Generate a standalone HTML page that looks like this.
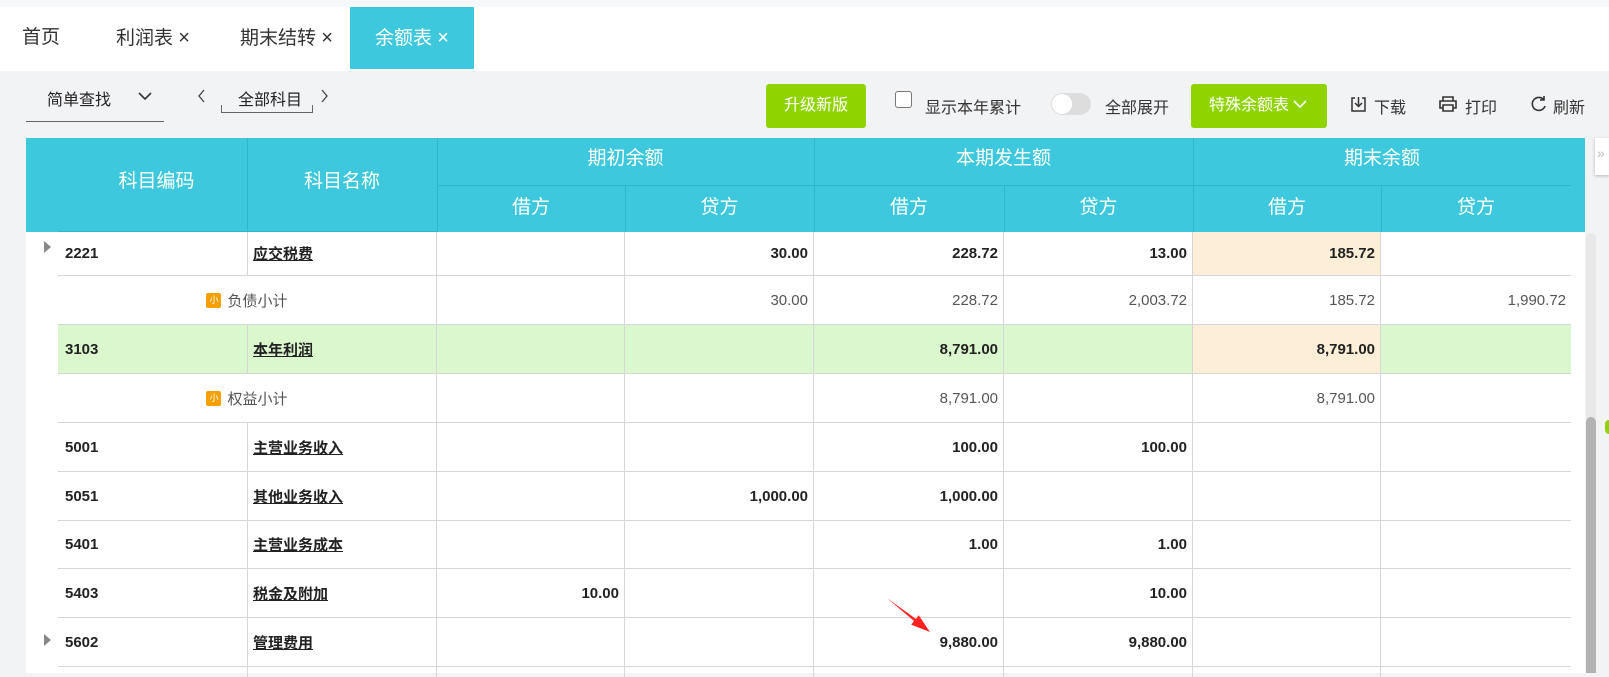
<!DOCTYPE html>
<html><head><meta charset="utf-8"><style>
*{margin:0;padding:0;box-sizing:border-box}
body{width:1609px;height:673px;overflow:hidden;background:#f2f3f5;font-family:"Liberation Sans","Noto Sans CJK SC",sans-serif;position:relative;color:#222}
.a{position:absolute}
.tab{position:absolute;top:7px;height:62px;line-height:62px;font-size:19px;color:#333}
.x{font-size:20px;font-weight:300}
.hd{position:absolute;background:#3ec8dd;color:#fff;font-size:19px;text-align:center}
.vl{position:absolute;width:1px;background:#2fb6cb}
.row{position:absolute;left:58px;width:1513px;border-bottom:1px solid #d6d6d6}
.c{position:absolute;top:0;height:100%;border-right:1px solid #d6d6d6;font-size:15px;display:flex;align-items:center}
.b{font-weight:bold}
.r{justify-content:flex-end;padding-right:5px}
.u{text-decoration:underline;padding-left:5px}
.sub{color:#555;font-weight:normal}
.ic{display:inline-block;width:15px;height:15px;background:#f5a000;border-radius:2px;color:#fff;font-size:9px;text-align:center;line-height:15px;margin-right:6px}
</style></head><body>
<div class="a" style="left:0;top:0;width:1609px;height:7px;background:#f7f8fa"></div>
<div class="a" style="left:0;top:7px;width:1609px;height:64px;background:#fff"></div>
<div class="tab" style="left:22px">首页</div>
<div class="tab" style="left:116px">利润表 <span class="x">×</span></div>
<div class="tab" style="left:240px">期末结转 <span class="x">×</span></div>
<div class="tab" style="left:350px;width:124px;background:#3ec8dd;color:#fff;text-align:center">余额表 <span class="x">×</span></div>

<div class="a" style="left:47px;top:86px;font-size:16px">简单查找</div>
<svg class="a" style="left:137px;top:91px" width="16" height="10"><path d="M2 2l6 6 6-6" fill="none" stroke="#333" stroke-width="1.6"/></svg>
<div class="a" style="left:26px;top:121px;width:138px;height:1px;background:#666"></div>
<svg class="a" style="left:196px;top:88px" width="10" height="16"><path d="M8 2L3 8l5 6" fill="none" stroke="#444" stroke-width="1.3"/></svg>
<div class="a" style="left:238px;top:86px;font-size:16px">全部科目</div>
<div class="a" style="left:221px;top:105px;width:92px;height:8px;border:1px solid #666;border-top:none"></div>
<svg class="a" style="left:320px;top:88px" width="10" height="16"><path d="M2 2l5 6-5 6" fill="none" stroke="#444" stroke-width="1.3"/></svg>

<div class="a" style="left:766px;top:84px;width:100px;height:44px;background:#8fd400;border-radius:3px;color:#fff;font-size:16px;line-height:44px;text-align:center">升级新版</div>
<div class="a" style="left:895px;top:91px;width:17px;height:17px;border:1.5px solid #777;border-radius:3px;background:#fff"></div>
<div class="a" style="left:925px;top:94px;font-size:16px;color:#333">显示本年累计</div>
<div class="a" style="left:1051px;top:93px;width:40px;height:22px;border-radius:11px;background:#ddd"></div>
<div class="a" style="left:1052px;top:94px;width:20px;height:20px;border-radius:10px;background:#fff"></div>
<div class="a" style="left:1105px;top:94px;font-size:16px;color:#333">全部展开</div>
<div class="a" style="left:1191px;top:84px;width:136px;height:44px;background:#8fd400;border-radius:3px;color:#fff;font-size:16px;line-height:44px;padding-left:18px">特殊余额表 <svg width="14" height="10" style="vertical-align:1px"><path d="M1 2l6 6 6-6" fill="none" stroke="#fff" stroke-width="1.6"/></svg></div>
<svg class="a" style="left:1350px;top:95px" width="18" height="18"><path d="M5 3H2v13h13V3h-3M8.5 2v9M5 8l3.5 3.5L12 8" fill="none" stroke="#333" stroke-width="1.5"/></svg>
<div class="a" style="left:1374px;top:94px;font-size:16px;color:#333">下载</div>
<svg class="a" style="left:1438px;top:95px" width="20" height="18"><path d="M5 6V2h10v4M5 13H2V6h16v7h-3M5 10h10v6H5z" fill="none" stroke="#333" stroke-width="1.6"/></svg>
<div class="a" style="left:1465px;top:94px;font-size:16px;color:#333">打印</div>
<svg class="a" style="left:1530px;top:95px" width="18" height="18"><path d="M14 5A6.5 6.5 0 1 0 15 11M14 1v4h-4" fill="none" stroke="#333" stroke-width="1.6"/></svg>
<div class="a" style="left:1553px;top:94px;font-size:16px;color:#333">刷新</div>

<div class="a" style="left:26px;top:232px;width:1559px;height:441px;background:#fff"></div>
<div class="hd" style="left:26px;top:138px;width:1559px;height:94px"></div>
<div class="hd" style="left:26px;top:138px;width:221px;height:94px;line-height:88px;padding-left:40px">科目编码</div>
<div class="hd" style="left:247px;top:138px;width:190px;height:94px;line-height:88px">科目名称</div>
<div class="hd" style="left:437px;top:138px;width:377px;height:47px;line-height:42px">期初余额</div>
<div class="hd" style="left:814px;top:138px;width:379px;height:47px;line-height:42px">本期发生额</div>
<div class="hd" style="left:1193px;top:138px;width:378px;height:47px;line-height:42px">期末余额</div>
<div class="a" style="left:437px;top:185px;width:1134px;height:1px;background:#2fb6cb"></div>
<div class="a" style="left:58px;top:231px;width:1513px;height:1px;background:#2fb6cb"></div>
<div class="hd" style="left:437px;top:186px;width:188px;height:46px;line-height:44px">借方</div>
<div class="hd" style="left:625px;top:186px;width:189px;height:46px;line-height:44px">贷方</div>
<div class="hd" style="left:814px;top:186px;width:190px;height:46px;line-height:44px">借方</div>
<div class="hd" style="left:1004px;top:186px;width:189px;height:46px;line-height:44px">贷方</div>
<div class="hd" style="left:1193px;top:186px;width:188px;height:46px;line-height:44px">借方</div>
<div class="hd" style="left:1381px;top:186px;width:190px;height:46px;line-height:44px">贷方</div>
<div class="vl" style="left:247px;top:138px;height:94px"></div>
<div class="vl" style="left:437px;top:138px;height:94px"></div>
<div class="vl" style="left:814px;top:138px;height:94px"></div>
<div class="vl" style="left:1193px;top:138px;height:94px"></div>
<div class="vl" style="left:625px;top:185px;height:47px"></div>
<div class="vl" style="left:1004px;top:185px;height:47px"></div>
<div class="vl" style="left:1381px;top:185px;height:47px"></div>

<div class="row" style="top:232px;height:44px">
<div class="c b" style="left:0;width:189px;padding-left:7px;border:none">2221</div>
<div class="c b" style="left:189px;width:190px;border-left:1px solid #d6d6d6"><span class="u">应交税费</span></div>
<div class="c b r" style="left:379px;width:188px"></div>
<div class="c b r" style="left:567px;width:189px">30.00</div>
<div class="c b r" style="left:756px;width:190px">228.72</div>
<div class="c b r" style="left:946px;width:189px">13.00</div>
<div class="c b r" style="left:1135px;width:188px;background:#fdeed8">185.72</div>
</div>
<div class="row" style="top:276px;height:49px">
<div class="c sub" style="left:0;width:379px;justify-content:center"><span class="ic">小</span>负债小计</div>
<div class="c sub" style="left:379px;width:188px"></div>
<div class="c sub r" style="left:567px;width:189px">30.00</div>
<div class="c sub r" style="left:756px;width:190px">228.72</div>
<div class="c sub r" style="left:946px;width:189px">2,003.72</div>
<div class="c sub r" style="left:1135px;width:188px">185.72</div>
<div class="c sub r" style="left:1323px;width:190px;border:none">1,990.72</div>
</div>
<div class="row" style="top:325px;height:49px;background:#dbf7cd">
<div class="c b" style="left:0;width:189px;padding-left:7px;border:none">3103</div>
<div class="c b" style="left:189px;width:190px;border-left:1px solid #d6d6d6"><span class="u">本年利润</span></div>
<div class="c b r" style="left:379px;width:188px"></div>
<div class="c b r" style="left:567px;width:189px"></div>
<div class="c b r" style="left:756px;width:190px">8,791.00</div>
<div class="c b r" style="left:946px;width:189px"></div>
<div class="c b r" style="left:1135px;width:188px;background:#fdeed8">8,791.00</div>
</div>
<div class="row" style="top:374px;height:49px">
<div class="c sub" style="left:0;width:379px;justify-content:center"><span class="ic">小</span>权益小计</div>
<div class="c sub" style="left:379px;width:188px"></div>
<div class="c sub" style="left:567px;width:189px"></div>
<div class="c sub r" style="left:756px;width:190px">8,791.00</div>
<div class="c sub" style="left:946px;width:189px"></div>
<div class="c sub r" style="left:1135px;width:188px">8,791.00</div>
</div>
<div class="row" style="top:423px;height:49px">
<div class="c b" style="left:0;width:189px;padding-left:7px;border:none">5001</div>
<div class="c b" style="left:189px;width:190px;border-left:1px solid #d6d6d6"><span class="u">主营业务收入</span></div>
<div class="c" style="left:379px;width:188px"></div><div class="c" style="left:567px;width:189px"></div>
<div class="c b r" style="left:756px;width:190px">100.00</div>
<div class="c b r" style="left:946px;width:189px">100.00</div>
<div class="c" style="left:1135px;width:188px"></div>
</div>
<div class="row" style="top:472px;height:49px">
<div class="c b" style="left:0;width:189px;padding-left:7px;border:none">5051</div>
<div class="c b" style="left:189px;width:190px;border-left:1px solid #d6d6d6"><span class="u">其他业务收入</span></div>
<div class="c" style="left:379px;width:188px"></div>
<div class="c b r" style="left:567px;width:189px">1,000.00</div>
<div class="c b r" style="left:756px;width:190px">1,000.00</div>
<div class="c" style="left:946px;width:189px"></div>
<div class="c" style="left:1135px;width:188px"></div>
</div>
<div class="row" style="top:521px;height:48px">
<div class="c b" style="left:0;width:189px;padding-left:7px;border:none">5401</div>
<div class="c b" style="left:189px;width:190px;border-left:1px solid #d6d6d6"><span class="u">主营业务成本</span></div>
<div class="c" style="left:379px;width:188px"></div><div class="c" style="left:567px;width:189px"></div>
<div class="c b r" style="left:756px;width:190px">1.00</div>
<div class="c b r" style="left:946px;width:189px">1.00</div>
<div class="c" style="left:1135px;width:188px"></div>
</div>
<div class="row" style="top:569px;height:49px">
<div class="c b" style="left:0;width:189px;padding-left:7px;border:none">5403</div>
<div class="c b" style="left:189px;width:190px;border-left:1px solid #d6d6d6"><span class="u">税金及附加</span></div>
<div class="c b r" style="left:379px;width:188px">10.00</div>
<div class="c" style="left:567px;width:189px"></div>
<div class="c" style="left:756px;width:190px"></div>
<div class="c b r" style="left:946px;width:189px">10.00</div>
<div class="c" style="left:1135px;width:188px"></div>
</div>
<div class="row" style="top:618px;height:49px">
<div class="c b" style="left:0;width:189px;padding-left:7px;border:none">5602</div>
<div class="c b" style="left:189px;width:190px;border-left:1px solid #d6d6d6"><span class="u">管理费用</span></div>
<div class="c" style="left:379px;width:188px"></div><div class="c" style="left:567px;width:189px"></div>
<div class="c b r" style="left:756px;width:190px">9,880.00</div>
<div class="c b r" style="left:946px;width:189px">9,880.00</div>
<div class="c" style="left:1135px;width:188px"></div>
</div>
<div class="row" style="top:667px;height:10px;border:none">
<div class="c" style="left:189px;width:190px;border-left:1px solid #d6d6d6"></div>
<div class="c" style="left:379px;width:188px"></div><div class="c" style="left:567px;width:189px"></div>
<div class="c" style="left:756px;width:190px"></div><div class="c" style="left:946px;width:189px"></div>
<div class="c" style="left:1135px;width:188px"></div>
</div>
<svg class="a" style="left:44px;top:241px" width="8" height="12"><path d="M0 0l7 6-7 6z" fill="#888"/></svg>
<svg class="a" style="left:44px;top:634px" width="8" height="12"><path d="M0 0l7 6-7 6z" fill="#888"/></svg>
<svg class="a" style="left:885px;top:596px" width="50" height="40"><path d="M2 2L31 23L33.7 19.3L45 36L26.3 28.7L29 25Z" fill="#f22"/></svg>
<div class="a" style="left:1586px;top:233px;width:10px;height:440px;background:#e8e8e8;border-radius:5px 5px 0 0"></div>
<div class="a" style="left:1586px;top:417px;width:10px;height:256px;background:#b2b2b2;border-radius:5px 5px 0 0"></div>
<div class="a" style="left:1595px;top:138px;width:14px;height:37px;background:#fff;box-shadow:0 1px 3px rgba(0,0,0,.25);color:#bbb;font-size:14px;line-height:30px;padding-left:2px">»</div>
<div class="a" style="left:1605px;top:420px;width:8px;height:14px;border-radius:7px;background:#8fd400"></div>
</body></html>
